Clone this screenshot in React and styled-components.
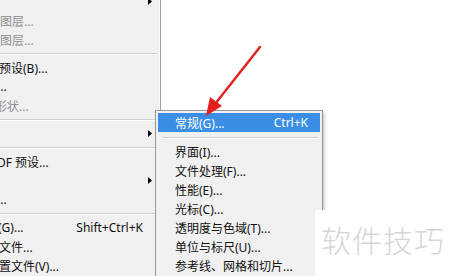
import React from 'react';
import styled, { createGlobalStyle } from 'styled-components';

const GlobalStyle = createGlobalStyle`
  html, body { margin: 0; padding: 0; background: #ffffff; }
  body { font-family: "Noto Sans", "Noto Sans CJK SC", sans-serif; }
`;

const leftItems = [
  { label: '', arrow: true },
  { label: '图层...', disabled: true },
  { label: '图层...', disabled: true },
  { sep: true },
  { label: '预设(B)...', shift: -1 },
  { label: '...', shift: -3 },
  { label: '形状...', disabled: true, shift: -5 },
  { sep: true },
  { label: '', arrow: true },
  { sep: true },
  { label: 'DF 预设...', shift: -3 },
  { label: '', arrow: true },
  { label: '...', shift: -3 },
  { sep: true },
  { label: '(G)...', shortcut: 'Shift+Ctrl+K', shift: -2 },
  { label: '文件...', shift: -1 },
  { label: '置文件(V)...', shift: -1 },
];

const subItems = [
  { label: '常规(G)...', shortcut: 'Ctrl+K', active: true },
  { sep: true },
  { label: '界面(I)...' },
  { label: '文件处理(F)...' },
  { label: '性能(E)...' },
  { label: '光标(C)...' },
  { label: '透明度与色域(T)...' },
  { label: '单位与标尺(U)...' },
  { label: '参考线、网格和切片...' },
];

const SubArrow = () => (
  <svg width="4" height="7" viewBox="0 0 4 7">
    <path d="M0 0 L4 3.5 L0 7 Z" fill="#000" />
  </svg>
);

const App = () => (
  <>
    <GlobalStyle />
    <Screen>
      <LeftMenu>
        <MenuList>
          {leftItems.map((it, i) =>
            it.sep ? (
              <LeftSep key={i} />
            ) : (
              <LeftRow key={i} $disabled={it.disabled}>
                <RowLabel style={{ marginLeft: it.shift || 0 }}>{it.label}</RowLabel>
                {it.shortcut && <LeftShortcut>{it.shortcut}</LeftShortcut>}
                {it.arrow && <ArrowSlot><SubArrow /></ArrowSlot>}
              </LeftRow>
            )
          )}
        </MenuList>
      </LeftMenu>
      <Canvas />

      <SubMenu>
        {subItems.map((it, i) =>
          it.sep ? (
            <SubSep key={i} />
          ) : (
            <SubRow key={i} $active={it.active}>
              <span>{it.label}</span>
              {it.shortcut && <span>{it.shortcut}</span>}
            </SubRow>
          )
        )}
      </SubMenu>

      <Pointer width="70" height="80" viewBox="0 0 70 80">
        <line x1="57" y1="5" x2="12" y2="62" stroke="#e3201c" strokeWidth="2.4" strokeLinecap="round" />
        <path d="M3 74 L7 55 L19 64 Z" fill="#e3201c" />
      </Pointer>

      <Watermark>软件技巧</Watermark>
    </Screen>
  </>
);

export default App;

const Screen = styled.div`
  position: relative;
  width: 450px;
  height: 276px;
  overflow: hidden;
  display: flex;
  background: #ffffff;
`;

const LeftMenu = styled.div`
  width: 160px;
  height: 100%;
  background: #f0f0f0;
  border-right: 1px solid #a3a3a3;
  box-shadow: inset -1px 0 0 #fbfbfb;
  overflow: hidden;
`;

const MenuList = styled.div`
  display: flex;
  flex-direction: column;
  margin-top: -8px;
`;

const LeftRow = styled.div`
  height: 19px;
  display: flex;
  align-items: center;
  font-size: 12px;
  color: ${(p) => (p.$disabled ? '#8f8f8f' : '#111111')};
  white-space: nowrap;
`;

const RowLabel = styled.span`
  flex: 0 0 auto;
`;

const LeftShortcut = styled.span`
  margin-left: auto;
  margin-right: 17px;
`;

const ArrowSlot = styled.span`
  margin-left: auto;
  margin-right: 8px;
  display: flex;
`;

const LeftSep = styled.div`
  height: 9px;
  display: flex;
  align-items: center;
  padding-right: 3px;
  &::before {
    content: '';
    flex: 1;
    height: 1px;
    background: #cfcfcf;
    box-shadow: 0 1px 0 #fdfdfd;
  }
`;

const Canvas = styled.div`
  flex: 1;
  background: #ffffff;
`;

const SubMenu = styled.div`
  position: absolute;
  left: 155px;
  top: 110px;
  width: 162px;
  height: 180px;
  padding: 2px;
  background: #f0f0f0;
  border: 1px solid #979797;
  box-shadow: 2px 2px 3px rgba(0, 0, 0, 0.18);
  display: flex;
  flex-direction: column;
`;

const SubRow = styled.div`
  height: 19px;
  display: flex;
  align-items: center;
  justify-content: space-between;
  padding: 0 12px 0 17px;
  font-size: 12px;
  white-space: nowrap;
  color: ${(p) => (p.$active ? '#ffffff' : '#111111')};
  background: ${(p) => (p.$active ? '#3a8ee6' : 'transparent')};
`;

const SubSep = styled.div`
  height: 10px;
  display: flex;
  align-items: center;
  padding: 0 2px 0 5px;
  &::before {
    content: '';
    flex: 1;
    height: 1px;
    background: #cfcfcf;
    box-shadow: 0 1px 0 #fdfdfd;
  }
`;

const Pointer = styled.svg`
  position: absolute;
  left: 203px;
  top: 42px;
`;

const Watermark = styled.div`
  position: absolute;
  left: 315px;
  top: 210px;
  right: 0;
  bottom: 0;
  background: #ffffff;
  padding: 14px 0 0 6px;
  font-family: "Noto Sans CJK SC", sans-serif;
  font-size: 30px;
  font-weight: 300;
  letter-spacing: 1px;
  line-height: 1;
  color: #d6d6d6;
  white-space: nowrap;
`;
